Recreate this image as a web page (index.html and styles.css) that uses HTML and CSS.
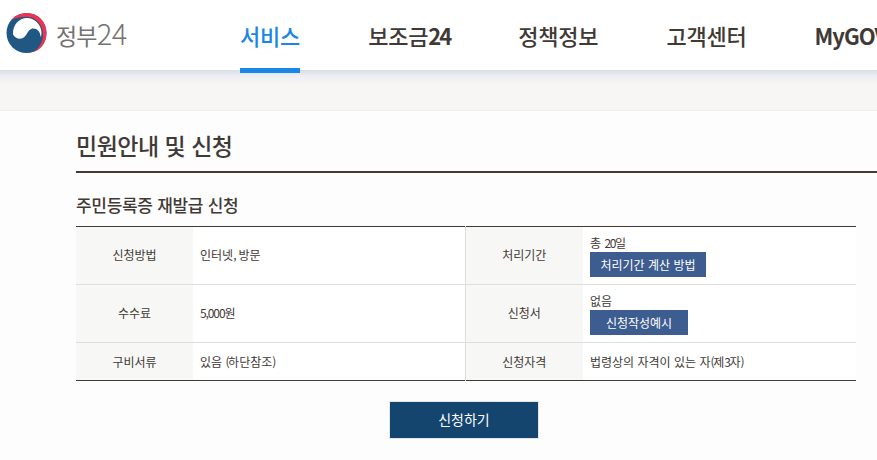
FILE: index.html
```html
<!DOCTYPE html>
<html lang="ko">
<head>
<meta charset="utf-8">
<title>민원안내 및 신청</title>
<link rel="stylesheet" href="styles.css">
</head>
<body>
<header class="header">
  <a class="logo" href="#">
    <svg class="logo-mark" width="41" height="40" viewBox="0 0 41 40">
      <circle cx="20.500" cy="20" r="20" fill="#215883"/>
      <path d="M7 21.500C6.500 12 13 5 21 5c8 0 14.500 7 14.500 15 0 1.500-.3 3-.9 4.200C34.500 18.500 31 15.500 27.500 15.500c-3.500 0-5 2.500-6.500 5-1.500 2.500-3.500 5.200-7 5.200-3 0-5.500-1.700-7-4.200Z" fill="#fff"/>
      <path d="M5 7.500C9 2.800 14.500 0 20.500 0 32 0 40.500 9 40.500 20c0 9.500-5.500 17-14 19.500 6.500-3.500 10.500-10.500 10.500-18C37 11.500 29.500 3.800 20.500 3.800 14 3.800 9 5 5 7.500Z" fill="#ee3350"/>
    </svg>
    <span class="logo-text">정부<span class="logo-num">24</span></span>
  </a>
  <nav class="nav">
    <a class="nav-item is-active" href="#">서비스</a>
    <a class="nav-item" href="#">보조금<span class="nav-num">24</span></a>
    <a class="nav-item" href="#">정책정보</a>
    <a class="nav-item" href="#">고객센터</a>
    <a class="nav-item nav-latin" href="#">MyGOV</a>
  </nav>
</header>
<div class="band"></div>
<main class="content">
  <h1 class="page-title">민원안내 및 신청</h1>
  <h2 class="sub-title">주민등록증 재발급 신청</h2>
  <table class="info">
    <colgroup>
      <col class="c-th"><col class="c-td-l"><col class="c-th2"><col class="c-td">
    </colgroup>
    <tbody>
      <tr class="row-tall">
        <th>신청방법</th>
        <td>인터넷<span class="tight">,</span> 방문</td>
        <th class="th-right">처리기간</th>
        <td class="stack"><p class="val">총 <span class="tight">20</span>일</p><a class="tag tag-wide" href="#">처리기간 계산 방법</a></td>
      </tr>
      <tr class="row-tall">
        <th>수수료</th>
        <td><span class="tight-num">5,000</span>원</td>
        <th class="th-right">신청서</th>
        <td class="stack"><p class="val">없음</p><a class="tag tag-narrow" href="#">신청작성예시</a></td>
      </tr>
      <tr class="row-short">
        <th>구비서류</th>
        <td>있음 <span class="tight">(</span>하단참조<span class="tight">)</span></td>
        <th class="th-right">신청자격</th>
        <td>법령상의 자격이 있는 자<span class="tight">(</span>제<span class="tight">3</span>자<span class="tight">)</span></td>
      </tr>
    </tbody>
  </table>
  <div class="actions"><a class="apply" href="#">신청하기</a></div>
</main>
</body>
</html>
```
FILE: styles.css
```css
* { box-sizing: border-box; }
html, body { margin: 0; padding: 0; height: 100%; overflow: hidden; }
body {
  width: 877px;
  background: #fdfdfd;
  color: #3f3a36;
  font-family: "Noto Sans CJK KR", "Noto Sans", sans-serif;
  font-size: 12px;
}
a { text-decoration: none; color: inherit; }

.header {
  height: 70px;
  background: #fff;
  display: flex;
  align-items: flex-start;
  white-space: nowrap;
}
.logo { display: flex; align-items: center; margin: 13px 0 0 6px; width: 234px; height: 40px; flex: none; }
.logo-mark { flex: none; }
.logo-text { margin-left: 9px; font-size: 23px; letter-spacing: -0.8px; color: #76716f; font-weight: 400; line-height: 38px; height: 40px; }
.logo-num { font-size: 29px; font-weight: 300; letter-spacing: -0.6px; }

.nav { display: flex; gap: 68px; flex: none; }
.nav-item {
  display: block;
  height: 73px;
  padding-top: 19px;
  font-size: 22px;
  line-height: 32px;
  font-weight: 500;
  color: #3f3a36;
  letter-spacing: -0.2px;
}
.nav-item.is-active { color: #1a87e8; border-bottom: 5px solid #1a87e8; position: relative; z-index: 2; }
.nav-num { letter-spacing: -2px; font-weight: 700; }
.nav-latin { letter-spacing: -1px; font-weight: 700; }

.band {
  height: 41px;
  background: linear-gradient(#d8dce7 0, #eceef2 6px, #f7f6f5 14px);
  border-bottom: 1px solid #ececea;
}

.content { padding-left: 76px; width: 877px; }
.page-title {
  margin: 16px 0 0;
  height: 46px;
  border-bottom: 2px solid #433a33;
  font-size: 23px;
  line-height: 36px;
  font-weight: 500;
  letter-spacing: -0.5px;
  color: #3f3a36;
}
.sub-title {
  margin: 20px 0 0;
  font-size: 17px;
  line-height: 24px;
  font-weight: 500;
  letter-spacing: -0.3px;
  color: #3f3a36;
}
.info {
  margin-top: 9px;
  width: 780px;
  table-layout: fixed;
  border-collapse: collapse;
  border-top: 1px solid #433a33;
  border-bottom: 1px solid #433a33;
}
.c-th { width: 117px; }
.c-td-l { width: 272px; }
.c-th2 { width: 118px; }
.info th, .info td {
  padding: 0;
  font-size: 12px;
  line-height: 14px;
  font-weight: 400;
  color: #3f3a36;
  border-bottom: 1px solid #dedede;
}
.info tr:last-child th, .info tr:last-child td { border-bottom: 0; }
.info th { background: #f7f7f5; text-align: center; }
.info td { padding-left: 7px; background: #fff; }
.info .th-right { border-left: 1px solid #dedede; }
.row-tall { height: 58px; }
.row-short { height: 38px; }
.info .row-tall th, .info .row-tall td { padding-bottom: 1px; }
.info .row-tall .stack { padding-top: 2px; padding-bottom: 0; }
.val { margin: 0; }
.tight { letter-spacing: -1.4px; }
.tight-num { letter-spacing: -1.1px; }
.tag {
  display: block;
  height: 25px;
  margin-top: 2px;
  background: #3d5c90;
  color: #fff;
  line-height: 25px;
  text-align: center;
}
.tag-wide { width: 116px; }
.tag-narrow { width: 98px; }
.actions { width: 776px; display: flex; justify-content: center; margin-top: 20px; }
.apply {
  width: 150px;
  height: 38px;
  background: #14456f;
  border: 1px solid #e4e6e8;
  color: #fff;
  font-size: 14px;
  line-height: 35px;
  text-align: center;
}
```
